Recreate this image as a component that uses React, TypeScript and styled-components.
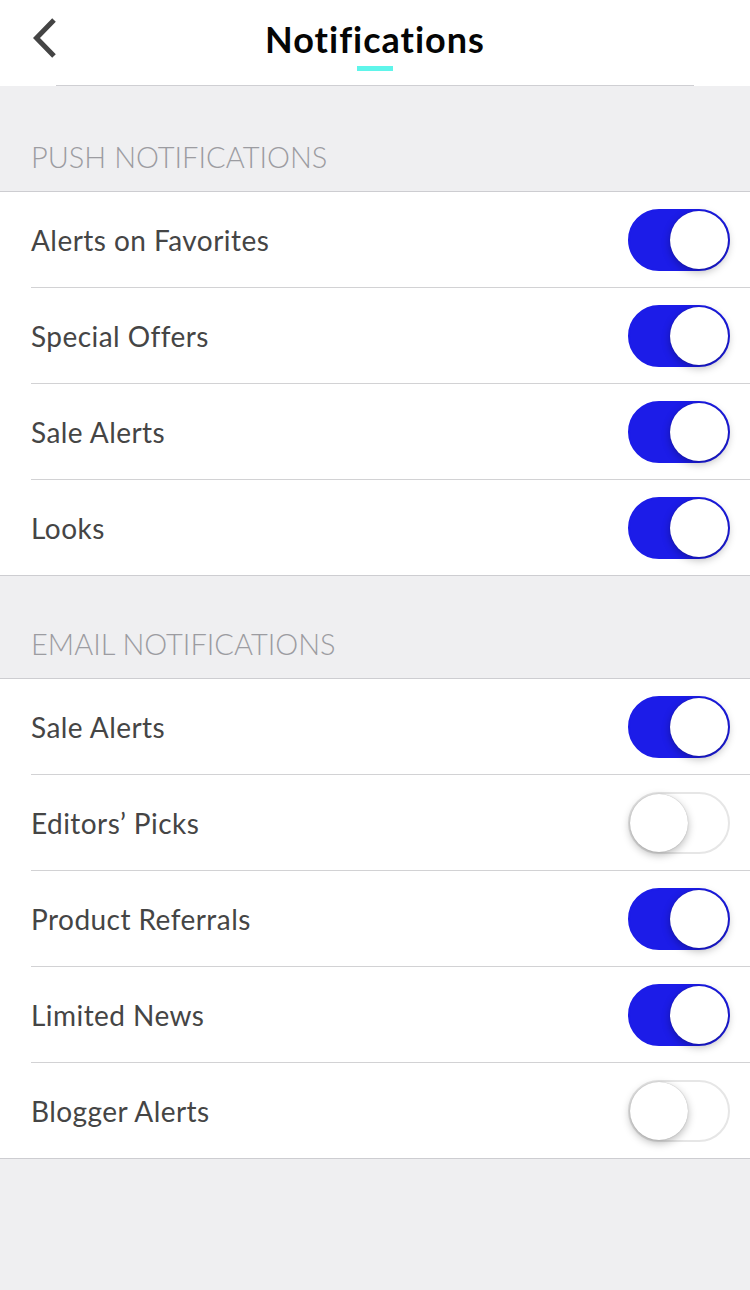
import React, { useState } from 'react';
import styled, { createGlobalStyle } from 'styled-components';

const GlobalStyle = createGlobalStyle`
  html, body {
    margin: 0;
    padding: 0;
    background: #efeff1;
  }
  * {
    box-sizing: border-box;
  }
`;

const Page = styled.div`
  width: 750px;
  min-height: 1290px;
  background: #efeff1;
  font-family: Lato, 'Open Sans', sans-serif;
`;

const Header = styled.header`
  position: relative;
  height: 86px;
  background: #fff;
  display: flex;
  align-items: flex-start;
  justify-content: center;
`;

const HeaderInner = styled.div`
  width: 638px;
  height: 86px;
  border-bottom: 1px solid #cfcfd3;
  display: flex;
  flex-direction: column;
  align-items: center;
`;

const BackButton = styled.button`
  position: absolute;
  left: 27px;
  top: 16px;
  width: 36px;
  height: 44px;
  border: none;
  background: none;
  padding: 0;
  cursor: pointer;
`;

const Title = styled.h1`
  margin: 17px 0 0;
  font-size: 36px;
  line-height: 44px;
  font-weight: 700;
  color: #050505;
  letter-spacing: 1px;
`;

const TitleMark = styled.div`
  margin-top: 5px;
  width: 36px;
  height: 5px;
  background: #5ff5ea;
`;

const SectionHeader = styled.div<{ $height: number }>`
  height: ${p => p.$height}px;
  padding: 0 31px 20px;
  display: flex;
  align-items: flex-end;
  font-size: 29px;
  line-height: 29px;
  font-weight: 300;
  color: #9c9ca1;
  border-bottom: 1px solid #cdcdd1;
`;

const List = styled.div`
  background: #fff;
  border-bottom: 1px solid #cdcdd1;
`;

const Row = styled.div`
  margin-left: 31px;
  height: 96px;
  padding-right: 20px;
  display: flex;
  align-items: center;
  justify-content: space-between;
  border-bottom: 1px solid #d2d2d4;
  &:last-child {
    border-bottom: none;
    height: 95px;
  }
`;

const Label = styled.span`
  font-size: 28px;
  color: #454545;
  letter-spacing: 0.45px;
`;

const Track = styled.button<{ $on: boolean }>`
  position: relative;
  width: 102px;
  height: 62px;
  border-radius: 31px;
  padding: 0;
  cursor: pointer;
  background: ${p => (p.$on ? '#1c1ce8' : '#fff')};
  border: 2px solid ${p => (p.$on ? '#1c1ce8' : '#e6e6e6')};
`;

const Knob = styled.span<{ $on: boolean }>`
  position: absolute;
  top: 0;
  left: ${p => (p.$on ? '40px' : '0')};
  width: 58px;
  height: 58px;
  border-radius: 50%;
  background: #fff;
  box-shadow: 0 3px 8px rgba(0, 0, 0, 0.28), 0 0 1px rgba(0, 0, 0, 0.3);
`;

type Item = { label: string; on: boolean };

const push: Item[] = [
  { label: 'Alerts on Favorites', on: true },
  { label: 'Special Offers', on: true },
  { label: 'Sale Alerts', on: true },
  { label: 'Looks', on: true },
];

const email: Item[] = [
  { label: 'Sale Alerts', on: true },
  { label: 'Editors\u2019 Picks', on: false },
  { label: 'Product Referrals', on: true },
  { label: 'Limited News', on: true },
  { label: 'Blogger Alerts', on: false },
];

const Toggle: React.FC<{ initial: boolean }> = ({ initial }) => {
  const [on, setOn] = useState(initial);
  return (
    <Track $on={on} onClick={() => setOn(!on)} aria-pressed={on}>
      <Knob $on={on} />
    </Track>
  );
};

const Section: React.FC<{ title: string; height: number; items: Item[] }> = ({ title, height, items }) => (
  <>
    <SectionHeader $height={height}>{title}</SectionHeader>
    <List>
      {items.map(item => (
        <Row key={item.label}>
          <Label>{item.label}</Label>
          <Toggle initial={item.on} />
        </Row>
      ))}
    </List>
  </>
);

const App: React.FC = () => (
  <Page>
    <GlobalStyle />
    <Header>
      <BackButton aria-label="Back">
        <svg width="36" height="44" viewBox="0 0 36 44">
          <path d="M27 4 L9.5 22 L27 40" fill="none" stroke="#444" strokeWidth="5" />
        </svg>
      </BackButton>
      <HeaderInner>
        <Title>Notifications</Title>
        <TitleMark />
      </HeaderInner>
    </Header>
    <Section title="PUSH NOTIFICATIONS" height={106} items={push} />
    <Section title="EMAIL NOTIFICATIONS" height={103} items={email} />
  </Page>
);

export default App;
